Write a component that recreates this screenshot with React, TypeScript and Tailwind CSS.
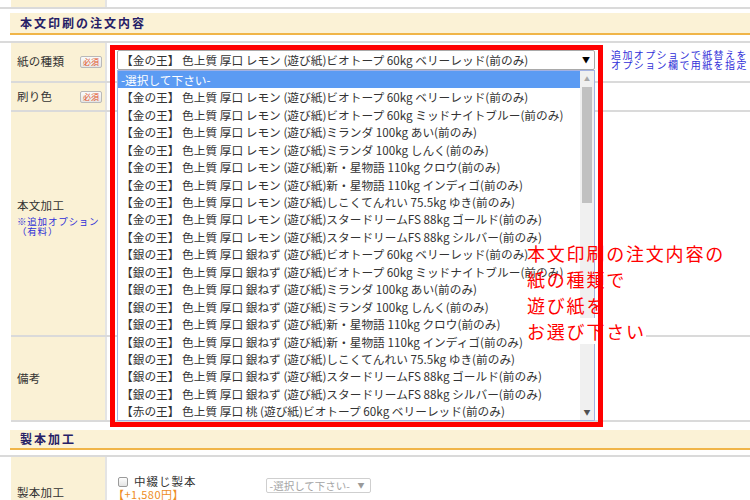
import React from "react";

const papers = [
  "ビオトープ 60kg ベリーレッド(前のみ)",
  "ビオトープ 60kg ミッドナイトブルー(前のみ)",
  "ミランダ 100kg あい(前のみ)",
  "ミランダ 100kg しんく(前のみ)",
  "新・星物語 110kg クロウ(前のみ)",
  "新・星物語 110kg インディゴ(前のみ)",
  "しこくてんれい 75.5kg ゆき(前のみ)",
  "スタードリームFS 88kg ゴールド(前のみ)",
  "スタードリームFS 88kg シルバー(前のみ)",
];

const options = [
  ...papers.map((p) => `【金の王】 色上質 厚口 レモン (遊び紙)${p}`),
  ...papers.map((p) => `【銀の王】 色上質 厚口 銀ねず (遊び紙)${p}`),
  "【赤の王】 色上質 厚口 桃 (遊び紙)ビオトープ 60kg ベリーレッド(前のみ)",
];

function Required() {
  return (
    <span className="ml-auto mr-[3px] flex h-[12px] w-[22px] items-center justify-center rounded-[2px] border border-[#b9b9b9] bg-gradient-to-b from-[#fafafa] to-[#e6e6e6] text-[8px] leading-none text-[#e2552b]">
      必須
    </span>
  );
}

function SectionHeader({ title, className }: { title: string; className?: string }) {
  return (
    <div className={`ml-[10px] flex items-center border-b-2 border-[#f0b548] bg-[#fbf2d6] pl-[10px] ${className ?? ""}`}>
      <span className="text-[12px] font-bold tracking-[2px] text-[#262066]">{title}</span>
    </div>
  );
}

function Row({ label, className, children }: { label: React.ReactNode; className?: string; children?: React.ReactNode }) {
  return (
    <div className={`flex border-b-2 border-[#dadada] ${className ?? ""}`}>
      <div className="flex w-[96px] shrink-0 border-r-2 border-[#e4e4e4] bg-[#faf1d5] pl-[6px]">{label}</div>
      <div className="relative flex-1 bg-white">{children}</div>
    </div>
  );
}

export default function App() {
  return (
    <div className="relative h-[500px] w-[750px] overflow-hidden bg-white font-['Noto_Sans_CJK_JP','Noto_Sans',sans-serif] text-[#333]">
      {/* tail of previous table */}
      <div className="flex h-[9px] border-b-2 border-[#dadada] pl-[11px]">
        <div className="w-[96px] border-r-2 border-[#e4e4e4] bg-[#faf1d5]" />
      </div>

      <SectionHeader title="本文印刷の注文内容" className="mt-[4px] h-[22px]" />

      <div className="mt-[6px] border-t-2 border-[#dadada] pl-[11px]">
        <Row
          className="h-[40px]"
          label={
            <div className="flex w-full items-center">
              <span className="text-[11.5px] tracking-[0.3px]">紙の種類</span>
              <Required />
            </div>
          }
        >
          <div className="flex pt-[7px] pl-[10px]">
            <div className="relative h-[20px] w-[478px]">
              <div className="flex h-full items-center justify-between rounded-[2px] border border-[#a9a9a9] bg-white pl-[3px] pr-[4px]">
                <span className="whitespace-pre text-[11.7px]">
                  【金の王】 色上質 厚口 レモン (遊び紙)ビオトープ 60kg ベリーレッド(前のみ)
                </span>
                <span className="text-[8px] text-black">▼</span>
              </div>

              {/* open dropdown list */}
              <div className="absolute left-0 top-[20px] z-10 flex h-[351px] w-full border border-[#a3b2e3] bg-white">
                <ul className="flex-1">
                  <li className="flex h-[17.45px] items-center bg-[#5b9bf3] pl-[3px] text-[11.7px] text-white">-選択して下さい-</li>
                  {options.map((o) => (
                    <li key={o} className="flex h-[17.45px] items-center whitespace-pre pl-[3px] text-[11.7px] text-[#333]">
                      {o}
                    </li>
                  ))}
                </ul>
                <div className="flex w-[14px] flex-col items-center bg-[#f0f0f0]">
                  <span className="mt-[5px] text-[6px] leading-none text-[#a8a8a8]">▲</span>
                  <div className="mt-[5px] h-[116px] w-[10px] bg-[#c1c1c1]" />
                  <span className="mb-[4px] mt-auto text-[7px] leading-none text-[#505050]">▼</span>
                </div>
              </div>
            </div>
            <p className="ml-[16px] whitespace-nowrap text-[10px] leading-[10px] tracking-[1.4px] text-[#3030d8]">
              追加オプションで紙替えを
              <br />
              オプション欄で用紙を指定
            </p>
          </div>
        </Row>

        <Row
          className="h-[29px]"
          label={
            <div className="flex w-full items-center">
              <span className="text-[11.5px] tracking-[0.3px]">刷り色</span>
              <Required />
            </div>
          }
        />

        <Row
          className="h-[225px]"
          label={
            <div className="flex flex-col justify-center pb-[13px]">
              <p className="text-[11.5px] leading-[14px] tracking-[0.3px]">本文加工</p>
              <p className="mt-[4px] text-[9.5px] leading-[10px] tracking-[0.8px] text-[#2f2fd8]">
                ※追加オプション
                <br />
                （有料）
              </p>
            </div>
          }
        />

        <Row
          className="h-[85px]"
          label={
            <div className="flex items-center">
              <span className="text-[11.5px] tracking-[0.3px]">備考</span>
            </div>
          }
        />
      </div>

      <SectionHeader title="製本加工" className="mt-[8px] h-[20px]" />

      <div className="mt-[5px] border-t-2 border-[#dadada] pl-[11px]">
        <Row
          className="h-[60px]"
          label={
            <div className="pt-[21px]">
              <span className="text-[11.5px] tracking-[0.3px]">製本加工</span>
            </div>
          }
        >
          <div className="flex pl-[11px] pt-[18px]">
            <div>
              <label className="flex items-center">
                <span className="h-[10px] w-[10px] rounded-[2px] border border-[#9a9a9a] bg-gradient-to-b from-[#fdfdfd] to-[#e4e4e4]" />
                <span className="ml-[6px] text-[11.5px] leading-[13px] tracking-[1px]">中綴じ製本</span>
              </label>
              <p className="-ml-[5px] text-[11px] leading-[13px] tracking-[0.5px] text-[#ee8c1e]">【+1,580円】</p>
            </div>
            <div className="ml-[69px] mt-[3px] flex h-[15px] w-[105px] items-center justify-between rounded-[2px] border border-[#cfcfcf] pl-[3px] pr-[5px]">
              <span className="text-[10.5px] text-[#a5a5a5]">-選択して下さい-</span>
              <span className="text-[7px] text-[#9a9a9a]">▼</span>
            </div>
          </div>
        </Row>
      </div>

      {/* annotation */}
      <p className="absolute left-[527px] top-[240px] z-20 text-[18px] leading-[26px] tracking-[1.8px] text-[#ff0000]">
        本文印刷の注文内容の
        <br />
        紙の種類で
        <br />
        遊び紙を
        <br />
        <span className="bg-white">お選び下さい</span>
      </p>
      <div className="pointer-events-none absolute left-[110px] top-[45px] z-30 h-[382px] w-[493px] border-[5px] border-[#ff0000]" />
    </div>
  );
}
